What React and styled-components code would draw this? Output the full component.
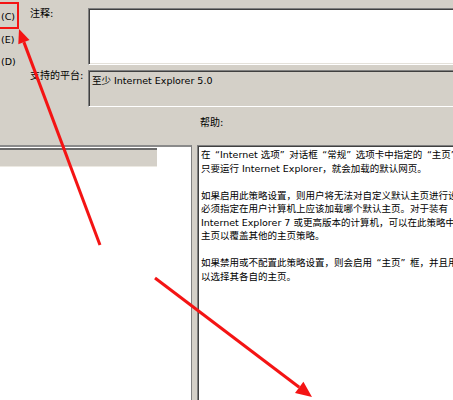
import React from "react";
import styled, { createGlobalStyle } from "styled-components";

const GlobalStyle = createGlobalStyle`
  html, body {
    margin: 0;
    padding: 0;
    overflow: hidden;
    background: #d4d0c8;
  }
`;

const font = `"DejaVu Sans", "Noto Sans CJK SC", sans-serif`;

const helpLines = [
  "在“Internet 选项”对话框“常规”选项卡中指定的“主页”是",
  "只要运行 Internet Explorer，就会加载的默认网页。",
  "",
  "如果启用此策略设置，则用户将无法对自定义默认主页进行设置。你",
  "必须指定在用户计算机上应该加载哪个默认主页。对于装有",
  "Internet Explorer 7 或更高版本的计算机，可以在此策略中设置",
  "主页以覆盖其他的主页策略。",
  "",
  "如果禁用或不配置此策略设置，则会启用“主页”框，并且用户可",
  "以选择其各自的主页。",
];

// SimSun-style full-width quotes
const withQuotes = (line) =>
  line.split(/([“”])/).map((part, i) =>
    part === "“" || part === "”" ? (
      <Quote key={i} $open={part === "“"}>
        {part}
      </Quote>
    ) : (
      part
    )
  );

const App = () => {
  return (
    <Page>
      <GlobalStyle />
      <Top>
        <RadioCol>
          <RadioLabel>(C)</RadioLabel>
          <RadioLabel>(E)</RadioLabel>
          <RadioLabel>(D)</RadioLabel>
        </RadioCol>
        <Fields>
          <FieldLabel>注释:</FieldLabel>
          <CommentBox />
          <FieldLabel>支持的平台:</FieldLabel>
          <PlatformBox>至少 Internet Explorer 5.0</PlatformBox>
        </Fields>
      </Top>
      <HelpLabel>帮助:</HelpLabel>
      <Panes>
        <OptionsPane>
          <OptionsHeader />
        </OptionsPane>
        <HelpPane>
          {helpLines.map((line, i) => (
            <HelpLine key={i}>{line ? withQuotes(line) : "\u00a0"}</HelpLine>
          ))}
        </HelpPane>
      </Panes>
      <Overlay width="453" height="400" viewBox="0 0 453 400">
        <rect x="-5" y="3" width="23" height="25" fill="none" stroke="#f41414" strokeWidth="2" />
        <line x1="100" y1="245" x2="23.9" y2="42.1" stroke="#f41414" strokeWidth="3" />
        <polygon points="19,29 29.5,40 18.3,44.2" fill="#f41414" />
        <line x1="155" y1="278" x2="299.2" y2="387.3" stroke="#f41414" strokeWidth="3" />
        <polygon points="312,397 295,392.9 303.4,381.7" fill="#f41414" />
      </Overlay>
    </Page>
  );
};

export default App;

const Page = styled.div`
  position: relative;
  width: 480px;
  height: 400px;
  overflow: hidden;
  background: #d4d0c8;
  font-family: ${font};
  font-size: 9.5px;
  color: #000;
`;

const Top = styled.div`
  display: flex;
  height: 107px;
`;

const RadioCol = styled.div`
  width: 30px;
  padding-top: 6px;
  display: flex;
  flex-direction: column;
`;

const RadioLabel = styled.div`
  line-height: 22.5px;
  padding-left: 1px;
`;

const Fields = styled.div`
  flex: 1;
  display: grid;
  grid-template-columns: 58px 1fr;
  grid-template-rows: 57px 37px;
  row-gap: 5px;
  padding-top: 8px;
`;

const FieldLabel = styled.div`
  line-height: 12px;
  font-size: 10px;
`;

const CommentBox = styled.div`
  background: #fff;
  border-top: 1px solid #808080;
  border-left: 1px solid #808080;
  border-bottom: 1px solid #fff;
  box-shadow: inset 1px 1px 0 #404040, inset 0 -1px 0 #e4e1da;
`;

const PlatformBox = styled.div`
  background: #d4d0c8;
  border-top: 1px solid #808080;
  border-left: 1px solid #808080;
  border-bottom: 1px solid #fff;
  box-shadow: inset 1px 1px 0 #404040;
  padding: 4px 3px 0;
  line-height: 12px;
`;

const HelpLabel = styled.div`
  padding-left: 200px;
  margin-top: 10px;
  line-height: 12px;
  font-size: 10px;
`;

const Panes = styled.div`
  display: flex;
  gap: 5px;
  margin-top: 16px;
  height: 255px;
`;

const OptionsPane = styled.div`
  width: 191px;
  background: #fff;
  border-top: 2px solid #8a8a8a;
  border-right: 1px solid #808080;
`;

const OptionsHeader = styled.div`
  width: 157px;
  height: 16px;
  margin-top: 1px;
  border-top: 2px solid #6a6a6a;
  background: #d4d0c8;
  box-shadow: 0 1px 0 #ece9e2;
`;

const HelpPane = styled.div`
  flex: 1;
  background: #fff;
  border-top: 1px solid #808080;
  border-left: 1px solid #808080;
  box-shadow: inset 1px 1px 0 #404040;
  padding: 2px 3px 0 3px;
  overflow: hidden;
`;

const HelpLine = styled.div`
  line-height: 13.5px;
  white-space: nowrap;
`;

const Quote = styled.span`
  display: inline-block;
  width: 9.5px;
  text-align: ${(p) => (p.$open ? "right" : "left")};
`;

const Overlay = styled.svg`
  position: absolute;
  left: 0;
  top: 0;
  pointer-events: none;
`;
